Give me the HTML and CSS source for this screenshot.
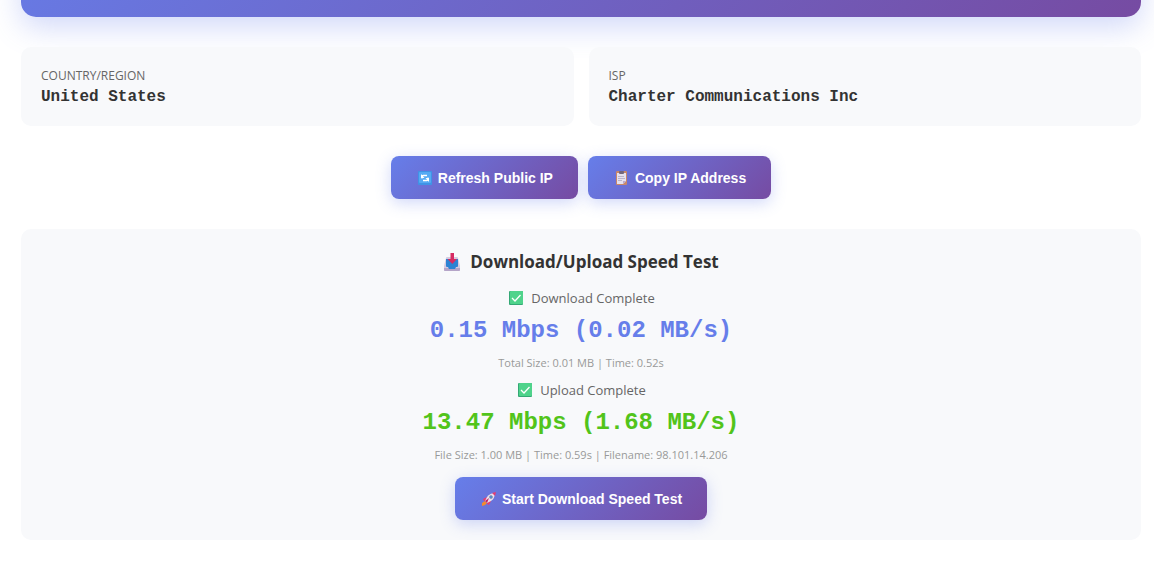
FILE: index.html
```html
<!DOCTYPE html>
<html lang="en">
<head>
    <meta charset="UTF-8">
    <meta name="viewport" content="width=device-width, initial-scale=1.0">
    <title>Public IP and Speed Test</title>
    <link rel="stylesheet" href="styles.css">
</head>
<body>
    <div class="container">
        <div class="ip-banner"></div>

        <div class="info-grid">
            <div class="info-card">
                <div class="info-label">COUNTRY/REGION</div>
                <div class="info-value">United States</div>
            </div>
            <div class="info-card">
                <div class="info-label">ISP</div>
                <div class="info-value">Charter Communications Inc</div>
            </div>
        </div>

        <div class="actions">
            <button type="button" class="btn">
                <svg class="icon" viewBox="0 0 14 14" aria-hidden="true">
                    <rect width="14" height="14" rx="1" fill="#3f93e6"/>
                    <rect x="1" y="1" width="12" height="11" rx="1" fill="#55a9f3"/>
                    <path d="M4 7.500V5.800Q4 4.500 5.300 4.500H9M10 6.500V8.200Q10 9.500 8.700 9.500H5" fill="none" stroke="#fff" stroke-width="1.300"/>
                    <path d="M3 3v4h3.500zM11 11V7H7.500z" fill="#fff"/>
                </svg>Refresh Public IP
            </button>
            <button type="button" class="btn">
                <svg class="icon" viewBox="0 0 14 14" aria-hidden="true">
                    <rect x="1" y="0" width="11" height="14" rx="1" fill="#c98768"/>
                    <path d="M2 2h9v8l-3 3H2z" fill="#e6e1ee"/>
                    <path d="M11 10H8v3z" fill="#b9a9cc"/>
                    <rect x="4" y="0" width="5" height="3" rx="1" fill="#70657c"/>
                    <path d="M3 5.500h6M3 7.500h7M3 9.500h4" stroke="#bbb4ca"/>
                </svg>Copy IP Address
            </button>
        </div>

        <div class="speed-test">
            <h3>
                <svg class="icon-title" viewBox="0 0 18 20" aria-hidden="true">
                    <path d="M4 5h10q1 0 1 1l2 8v4q0 1-1 1H2q-1 0-1-1v-4l2-8q0-1 1-1z" fill="#d5cae0"/>
                    <path d="M1 16h16v2q0 1-1 1H2q-1 0-1-1z" fill="#b5a5c8"/>
                    <path d="M3 7h12v7q0 1-1 1h-1l-1 2H6l-1-2H4q-1 0-1-1z" fill="#2c83d3"/>
                    <path d="M7.500 1h3.500v6h3l-4.700 5L4.500 7h3z" fill="#d62b62"/>
                </svg>Download/Upload Speed Test
            </h3>

            <div class="status">
                <svg class="icon" viewBox="0 0 14 14" aria-hidden="true">
                    <rect width="14" height="14" rx="1" fill="#34a875"/>
                    <rect x="1" width="13" height="13" rx="1" fill="#4fd38b"/>
                    <path d="M3 7l3 3 5.500-6" fill="none" stroke="#fff" stroke-width="1.300"/>
                </svg>Download Complete
            </div>
            <div class="speed">0.15 Mbps (0.02 MB/s)</div>
            <div class="details">Total Size: 0.01 MB | Time: 0.52s</div>

            <div class="status">
                <svg class="icon" viewBox="0 0 14 14" aria-hidden="true">
                    <rect width="14" height="14" rx="1" fill="#34a875"/>
                    <rect x="1" width="13" height="13" rx="1" fill="#4fd38b"/>
                    <path d="M3 7l3 3 5.500-6" fill="none" stroke="#fff" stroke-width="1.300"/>
                </svg>Upload Complete
            </div>
            <div class="speed upload">13.47 Mbps (1.68 MB/s)</div>
            <div class="details">File Size: 1.00 MB | Time: 0.59s | Filename: 98.101.14.206</div>

            <button type="button" class="btn">
                <svg class="icon" viewBox="0 0 14 14" aria-hidden="true">
                    <path d="M5 5L1 7l1 2 3-1M9 9l-2 4-2-1 1-3" fill="#e53c70"/>
                    <path d="M3 9L0 11v3l3-1 2-2z" fill="#f58a2c"/>
                    <path d="M13 1Q8 1 5 5L3 9l2 2 4-2Q13 6 13 1z" fill="#e6e0ee"/>
                    <path d="M14 0l-4 1 3 3z" fill="#e53c70"/>
                    <path d="M3 9l4-3-2 5z" fill="#c42360"/>
                    <circle cx="9" cy="5" r="1.500" fill="#4a91cf" stroke="#8e83a2" stroke-width=".6"/>
                </svg>Start Download Speed Test
            </button>
        </div>
    </div>
</body>
</html>
```
FILE: styles.css
```css
* {
    box-sizing: border-box;
}

body {
    font-family: "Segoe UI", "Open Sans", sans-serif;
    background-color: #fff;
    color: #333;
    margin: 0;
    overflow-x: hidden;
}

.container {
    padding: 0 13px 27px 21px;
}

/* the banner runs off the top of the page */
.ip-banner {
    height: 150px;
    margin-top: -133px;
    margin-bottom: 30px;
    border-radius: 15px;
    background: linear-gradient(135deg, #667eea 0%, #764ba2 100%);
    box-shadow: 0 10px 30px rgba(102, 126, 234, 0.3);
}

.info-grid {
    display: grid;
    grid-template-columns: 1fr 1fr;
    gap: 15px;
    margin-bottom: 30px;
    position: relative;
}

.info-card {
    background-color: #f8f9fb;
    padding: 20px;
    border-radius: 10px;
}

.info-label {
    font-size: 12px;
    line-height: 18px;
    color: #666;
    margin-bottom: 3px;
}

.info-value {
    font-family: "Courier New", "Liberation Mono", monospace;
    font-size: 16px;
    font-weight: 600;
    line-height: 18px;
}

.actions {
    display: flex;
    justify-content: center;
    gap: 10px;
    margin-bottom: 30px;
}

.btn {
    display: inline-flex;
    align-items: center;
    height: 43px;
    padding: 0 25px;
    border: none;
    border-radius: 8px;
    background: linear-gradient(135deg, #667eea 0%, #764ba2 100%);
    box-shadow: 0 4px 15px rgba(102, 126, 234, 0.3);
    color: white;
    font-family: Arial, "Liberation Sans", sans-serif;
    font-size: 14px;
    font-weight: 600;
    cursor: pointer;
}

.icon {
    width: 14px;
    height: 14px;
    margin: 0 6px 0 2px;
}

.speed-test {
    display: flex;
    flex-direction: column;
    align-items: center;
    background-color: #f8f9fb;
    border-radius: 10px;
    padding: 20px;
}

.speed-test h3 {
    display: flex;
    align-items: center;
    margin: 0 0 14px;
    font-size: 17px;
    line-height: 25px;
}

.icon-title {
    width: 18px;
    height: 20px;
    margin-right: 9px;
}

.status {
    display: flex;
    align-items: center;
    font-size: 13px;
    line-height: 20px;
    color: #666;
}

.status .icon {
    margin-right: 8px;
}

.speed {
    margin: 9px 0 10px;
    font-family: "Courier New", "Liberation Mono", monospace;
    font-size: 24px;
    font-weight: bold;
    line-height: 28px;
    color: #667eea;
}

.speed.upload {
    color: #52c41a;
}

.details {
    margin-bottom: 9px;
    font-size: 11px;
    line-height: 16px;
    color: #999;
}

.speed-test .btn {
    margin-top: 5px;
}
```
